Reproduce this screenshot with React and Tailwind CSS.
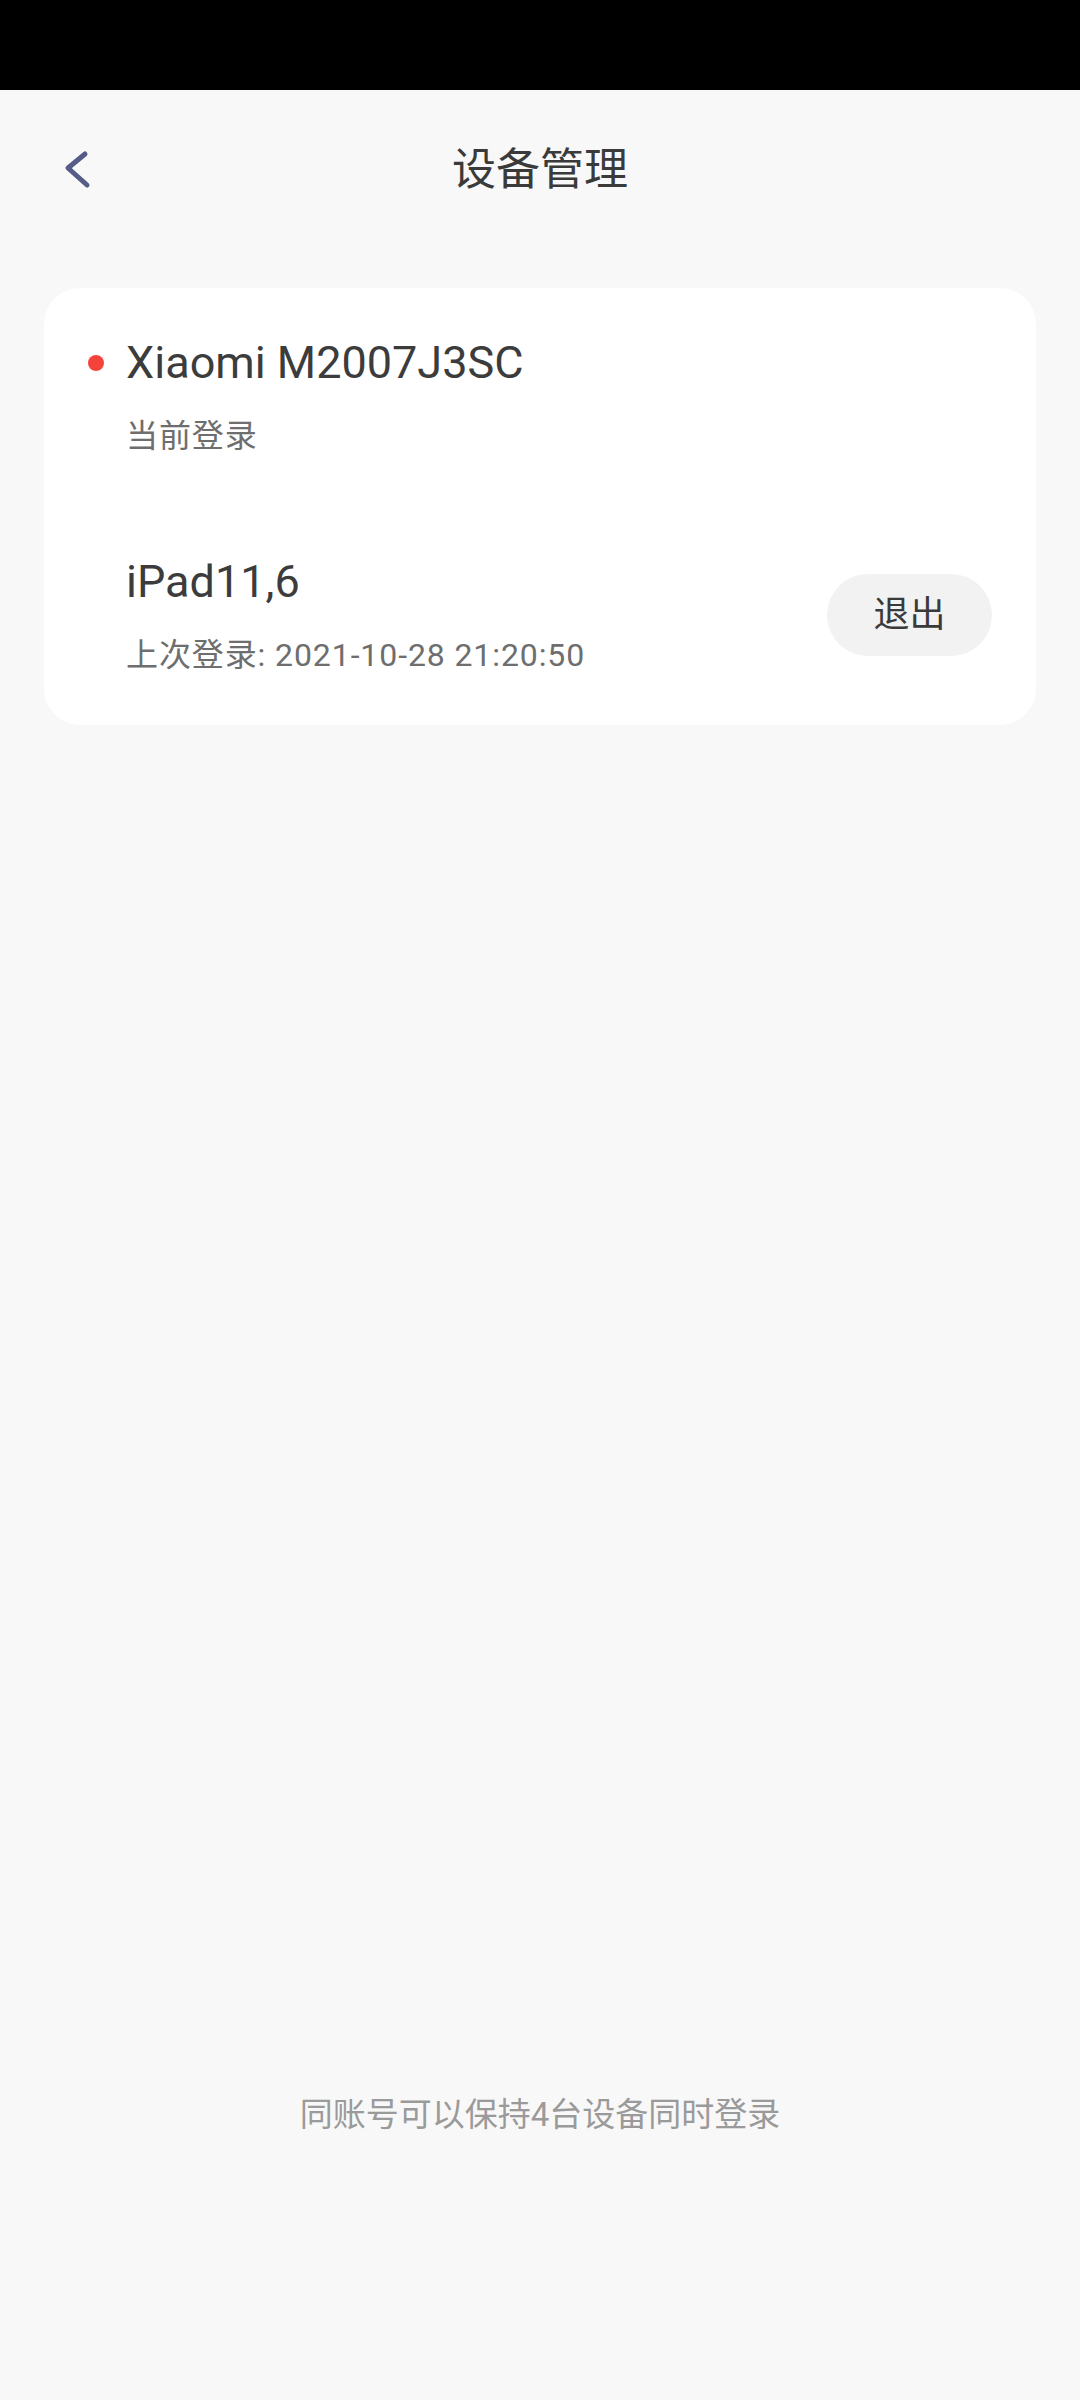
import React from 'react';

const devices = [
  { id: 1, name: 'Xiaomi M2007J3SC', sub: '当前登录', current: true },
  { id: 2, name: 'iPad11,6', sub: '上次登录: 2021-10-28 21:20:50', current: false },
];

const BackIcon = () => (
  <svg width="40" height="44" viewBox="0 0 40 44" fill="none">
    <path
      d="M27 6 L10 20 L29 37"
      stroke="#565c88"
      strokeWidth="5"
      strokeLinecap="round"
      strokeLinejoin="round"
    />
  </svg>
);

const App = () => {
  return (
    <div
      className="w-[1080px] h-[2400px] bg-[#f8f8f8] flex flex-col"
      style={{ fontFamily: 'Roboto, "Noto Sans CJK SC", sans-serif' }}
    >
      {/* status bar */}
      <div className="h-[90px] bg-black shrink-0" />

      {/* header */}
      <div className="h-[160px] shrink-0 flex items-center relative">
        <button className="ml-[58px] w-[40px] h-[44px] flex items-center justify-center">
          <BackIcon />
        </button>
        <div className="absolute left-0 right-0 text-center text-[44px] leading-[60px] text-[#3a3a3a] pointer-events-none">
          设备管理
        </div>
      </div>

      {/* device card */}
      <div className="mx-[44px] mt-[38px] bg-white rounded-[36px] pt-[45px] pb-[48px]">
        {devices.map((d, i) => (
          <div
            key={d.id}
            className={`flex items-center pl-[44px] pr-[44px] ${i > 0 ? 'mt-[94px]' : ''}`}
          >
            <div className="w-[38px] self-start h-[60px] flex items-center">
              {d.current && <span className="block w-[16px] h-[16px] rounded-full bg-[#f4433a]" />}
            </div>
            <div className="flex-1 flex flex-col">
              <span className="text-[45px] leading-[60px] text-[#3c3c3c]">{d.name}</span>
              <span className="mt-[21px] text-[32px] leading-[44px] tracking-[0.9px] text-[#6e6e6e]">{d.sub}</span>
            </div>
            {!d.current && (
              <button className="w-[165px] h-[82px] rounded-full bg-[#f2f2f2] text-[36px] text-[#3a3a3a]">
                退出
              </button>
            )}
          </div>
        ))}
      </div>

      <div className="flex-1" />

      {/* footer note */}
      <div className="text-center text-[33px] leading-[44px] text-[#9a9a9a] mb-[263px]">
        同账号可以保持4台设备同时登录
      </div>
    </div>
  );
};

export default App;
